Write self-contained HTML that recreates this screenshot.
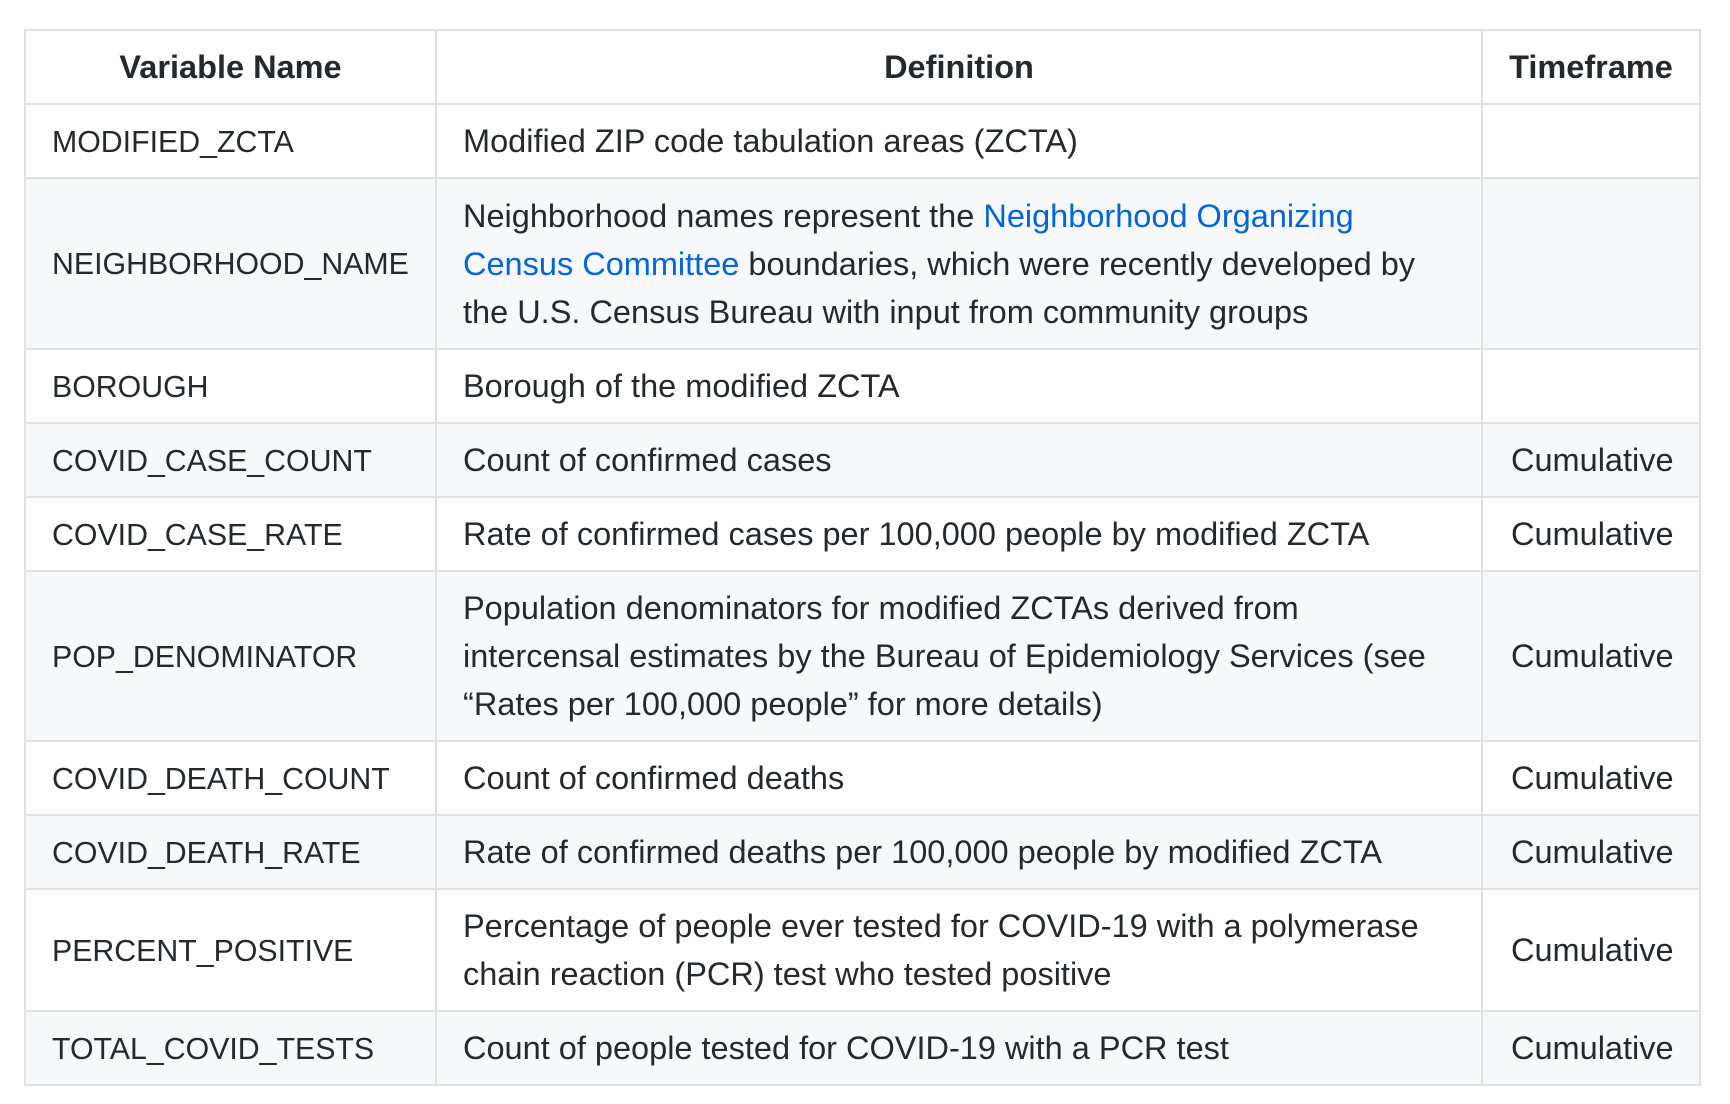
<!DOCTYPE html>
<html><head><meta charset="utf-8"><style>
html,body{margin:0;padding:0;background:#fff;width:1730px;height:1104px;overflow:hidden}
table{position:absolute;left:24px;top:29px;border-collapse:collapse;table-layout:fixed;width:1675px;font-family:"Liberation Sans",Arial,sans-serif;font-size:32.5px;color:#24292e}
td,th{border:2px solid #dfe2e5;padding:0 0 0 26px;line-height:48px;vertical-align:middle;white-space:nowrap;overflow:visible}
th{font-weight:bold;text-align:center;padding:0}
td:first-child{font-size:30.3px;padding-top:3px}
tr:nth-child(odd):not(:first-child) td{background:#f6f8fa}
td.t{padding:0 0 0 28px}
a{color:#0366d6;text-decoration:none}
</style></head><body>
<table>
<colgroup><col style="width:411px"><col style="width:1046px"><col style="width:218px"></colgroup>
<tr style="height:74px"><th>Variable Name</th><th>Definition</th><th>Timeframe</th></tr>
<tr style="height:74px"><td>MODIFIED_ZCTA</td><td>Modified ZIP code tabulation areas (ZCTA)</td><td class="t"></td></tr>
<tr style="height:171px"><td>NEIGHBORHOOD_NAME</td><td>Neighborhood names represent the <a>Neighborhood Organizing</a><br><a>Census Committee</a> boundaries, which were recently developed by<br>the U.S. Census Bureau with input from community groups</td><td class="t"></td></tr>
<tr style="height:74px"><td>BOROUGH</td><td>Borough of the modified ZCTA</td><td class="t"></td></tr>
<tr style="height:74px"><td>COVID_CASE_COUNT</td><td>Count of confirmed cases</td><td class="t">Cumulative</td></tr>
<tr style="height:74px"><td>COVID_CASE_RATE</td><td>Rate of confirmed cases per 100,000 people by modified ZCTA</td><td class="t">Cumulative</td></tr>
<tr style="height:170px"><td>POP_DENOMINATOR</td><td>Population denominators for modified ZCTAs derived from<br>intercensal estimates by the Bureau of Epidemiology Services (see<br>“Rates per 100,000 people” for more details)</td><td class="t">Cumulative</td></tr>
<tr style="height:74px"><td>COVID_DEATH_COUNT</td><td>Count of confirmed deaths</td><td class="t">Cumulative</td></tr>
<tr style="height:74px"><td>COVID_DEATH_RATE</td><td>Rate of confirmed deaths per 100,000 people by modified ZCTA</td><td class="t">Cumulative</td></tr>
<tr style="height:122px"><td>PERCENT_POSITIVE</td><td>Percentage of people ever tested for COVID-19 with a polymerase<br>chain reaction (PCR) test who tested positive</td><td class="t">Cumulative</td></tr>
<tr style="height:74px"><td>TOTAL_COVID_TESTS</td><td>Count of people tested for COVID-19 with a PCR test</td><td class="t">Cumulative</td></tr>
</table>
</body></html>
